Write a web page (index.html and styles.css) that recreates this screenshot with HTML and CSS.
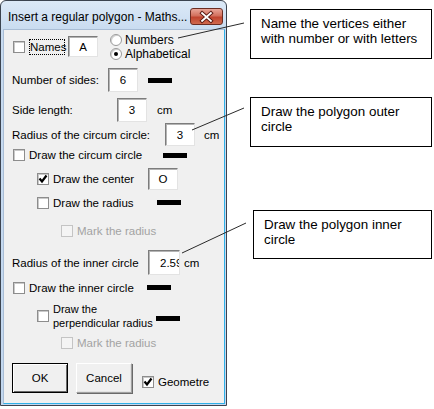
FILE: index.html
```html
<!DOCTYPE html>
<html lang="en">
<head>
  <meta charset="UTF-8">
  <title>Insert a regular polygon</title>
  <link rel="stylesheet" href="styles.css">
</head>
<body>
  <div class="page">
    <div class="dialog">
      <div class="titlebar">
        <span class="title">Insert a regular polygon - Maths...</span>
        <span class="close">
          <svg width="32" height="16" viewBox="0 0 32 16">
            <path d="M11.5 4 L20.5 12 M20.5 4 L11.5 12" stroke="#5a1a12" stroke-width="4" stroke-linecap="square"/>
            <path d="M11.5 4 L20.5 12 M20.5 4 L11.5 12" stroke="#fff" stroke-width="2" stroke-linecap="square"/>
          </svg>
        </span>
      </div>

      <div class="client">
        <div class="row row-names">
          <span class="check ml9"></span>
          <span class="focus">Names</span>
          <span class="input in-names">A</span>
          <div class="radios">
            <div class="radio-row"><span class="radio"></span><span class="rlabel">Numbers</span></div>
            <div class="radio-row"><span class="radio on"></span><span class="rlabel">Alphabetical</span></div>
          </div>
        </div>

        <div class="row row-sides">
          <span class="label w96">Number of sides:</span>
          <span class="input in-24">6</span>
          <span class="bar ml10"></span>
        </div>

        <div class="row row-side">
          <span class="label w105">Side length:</span>
          <span class="input in-24">3</span>
          <span class="unit ml10">cm</span>
        </div>

        <div class="row row-circum">
          <span class="label w153">Radius of the circum circle:</span>
          <span class="input in-23">3</span>
          <span class="unit ml9">cm</span>
        </div>

        <div class="row row-e">
          <span class="check ml9"></span>
          <span class="clabel w134">Draw the circum circle</span>
          <span class="bar"></span>
        </div>

        <div class="row row-f">
          <span class="check ml33 checked"><svg width="10" height="10" viewBox="0 0 10 10"><path d="M1.5 4.5 L4 7.5 L8.5 1.5" fill="none" stroke="#000" stroke-width="2.2"/></svg></span>
          <span class="clabel w95">Draw the center</span>
          <span class="input in-22">O</span>
        </div>

        <div class="row row-g">
          <span class="check ml33"></span>
          <span class="clabel w104">Draw the radius</span>
          <span class="bar"></span>
        </div>

        <div class="row row-h">
          <span class="check ml57 off"></span>
          <span class="clabel muted">Mark the radius</span>
        </div>

        <div class="row row-i">
          <span class="label w136">Radius of the inner circle</span>
          <span class="input in-inner">2.59</span>
          <span class="unit ml4">cm</span>
        </div>

        <div class="row row-j">
          <span class="check ml9"></span>
          <span class="clabel w118">Draw the inner circle</span>
          <span class="bar"></span>
        </div>

        <div class="row row-k">
          <span class="check ml33"></span>
          <span class="clabel two w103">Draw the<br>perpendicular radius</span>
          <span class="bar low"></span>
        </div>

        <div class="row row-l">
          <span class="check ml57 off"></span>
          <span class="clabel muted">Mark the radius</span>
        </div>

        <div class="row row-m">
          <span class="btn default">OK</span>
          <span class="btn">Cancel</span>
          <span class="check ml10 geo checked"><svg width="10" height="10" viewBox="0 0 10 10"><path d="M1.5 4.5 L4 7.5 L8.5 1.5" fill="none" stroke="#000" stroke-width="2.2"/></svg></span>
          <span class="clabel geo-label">Geometre</span>
        </div>
      </div>
    </div>

    <div class="notes">
      <div class="note note-names">Name the vertices either<br>with number or with letters</div>
      <div class="note note-outer">Draw the polygon outer<br>circle</div>
      <div class="note note-inner">Draw the polygon inner<br>circle</div>
    </div>

    <svg class="leaders" width="434" height="409" viewBox="0 0 434 409">
      <line x1="178" y1="38" x2="244" y2="23"/>
      <line x1="192" y1="130" x2="244" y2="108"/>
      <line x1="182" y1="253" x2="246" y2="223"/>
    </svg>
  </div>
</body>
</html>
```

FILE: styles.css
```css
body {
  margin: 0;
  background: #fff;
  font-family: "Liberation Sans", Arial, sans-serif;
  color: #000;
}

.page {
  position: relative;
  display: flex;
  align-items: flex-start;
  width: 434px;
  height: 409px;
}

/* window frame */
.dialog {
  width: 222px;
  height: 403px;
  border: 1px solid #3c4450;
  border-radius: 6px 6px 0 0;
  background: linear-gradient(#dce9f7, #c8dbf0 30px, #c2d7ef);
  padding: 0 1px 1px 2px;
  display: flex;
  flex-direction: column;
}

.titlebar {
  height: 28px;
  display: flex;
  align-items: center;
  justify-content: space-between;
}

.title {
  font-family: "Liberation Sans", Arial, sans-serif;
  font-size: 12px;
  margin-left: 5px;
  margin-top: 4px;
  color: #000;
}

.close {
  width: 31px;
  height: 15px;
  margin-top: 3px;
  margin-right: 2px;
  border: 1px solid #6b2c22;
  border-radius: 3px;
  background: linear-gradient(#e9a598, #d2705d 45%, #c0442f 55%, #d06a4e);
  display: flex;
}

.client {
  flex: 1;
  background: #f0f0f0;
  border-top: 1px solid #a9bdd5;
  border-left: 1px solid #a9bdd5;
  border-right: 1px solid #2fb0e8;
  border-bottom: 1px solid #2fb0e8;
  padding-top: 3px;
  font-size: 11.5px;
}

.row {
  display: flex;
  align-items: center;
}

.row-names { height: 27px; }
.row-sides { height: 24px; margin-top: 8px; }
.row-side { height: 24px; margin-top: 6px; }
.row-circum { height: 23px; margin-top: 1px; }
.row-e { height: 14px; margin-top: 2px; }
.row-f { height: 22px; margin-top: 6px; }
.row-g { height: 13px; margin-top: 6px; }
.row-h { height: 13px; margin-top: 15px; }
.row-i { height: 25px; margin-top: 13px; }
.row-j { height: 13px; margin-top: 6px; }
.row-k { height: 28px; margin-top: 8px; }
.row-l { height: 14px; margin-top: 6px; }
.row-m { height: 30px; margin-top: 13px; }

.ml4 { margin-left: 4px; }
.ml9 { margin-left: 9px; }
.ml10 { margin-left: 10px; }
.ml33 { margin-left: 33px; }
.ml57 { margin-left: 57px; }

.label {
  margin-left: 8px;
  flex: none;
}

.w96 { width: 96px; }
.w105 { width: 105px; }
.w153 { width: 153px; }
.w136 { width: 136px; }
.w134 { width: 134px; }
.w95 { width: 95px; }
.w104 { width: 104px; }
.w118 { width: 118px; }
.w103 { width: 103px; }

/* checkboxes */
.check {
  width: 10px;
  height: 10px;
  flex: none;
  background: #fff;
  border: 1px solid #8d8d8d;
  box-shadow: inset 1px 1px 0 #c9c9c9;
  display: flex;
  align-items: center;
  justify-content: center;
}

.check.off {
  border-color: #c4c4c4;
  background: #f4f4f4;
  box-shadow: none;
}

.clabel {
  margin-left: 4px;
  flex: none;
}

.clabel.two {
  font-size: 11px;
  line-height: 14px;
  white-space: nowrap;
}

.muted {
  color: #a3a3a3;
}

.focus {
  margin-left: 4px;
  width: 34px;
  height: 14px;
  line-height: 14px;
  border: 1px dotted #000;
  text-align: center;
}

/* text boxes */
.input {
  flex: none;
  box-sizing: border-box;
  width: 30px;
  background: #fff;
  border-top: 1px solid #7c7c7c;
  border-left: 1px solid #7c7c7c;
  border-right: 1px solid #e3e3e3;
  border-bottom: 1px solid #e3e3e3;
  box-shadow: inset 1px 1px 0 #b4b4b4;
  display: flex;
  align-items: center;
  justify-content: center;
}

.in-names { height: 21px; margin-left: 3px; }
.in-24 { height: 24px; }
.in-23 { height: 23px; }
.in-22 { height: 22px; }

.in-inner {
  width: 32px;
  height: 25px;
  justify-content: flex-start;
  padding-left: 11px;
  overflow: hidden;
  white-space: nowrap;
}

.unit {
  flex: none;
}

.bar {
  flex: none;
  width: 24px;
  height: 5px;
  background: #000;
}

.bar.low {
  margin-top: 5px;
}

/* option buttons */
.radios {
  align-self: flex-start;
  margin-left: 12px;
  display: flex;
  flex-direction: column;
}

.radio-row {
  height: 14px;
  display: flex;
  align-items: center;
}

.radio {
  width: 10px;
  height: 10px;
  border: 1px solid #9a9a9a;
  border-radius: 50%;
  background: #fff;
  box-shadow: inset 1px 1px 0 #d0d0d0;
  position: relative;
}

.radio.on::after {
  content: "";
  position: absolute;
  left: 3px;
  top: 3px;
  width: 4px;
  height: 4px;
  border-radius: 50%;
  background: #000;
}

.rlabel {
  margin-left: 3px;
  font-size: 12px;
}

/* command buttons */
.btn {
  box-sizing: border-box;
  width: 56px;
  height: 30px;
  margin-left: 8px;
  background: #f0f0f0;
  border-top: 1px solid #fff;
  border-left: 1px solid #fff;
  border-right: 1px solid #a0a0a0;
  border-bottom: 1px solid #a0a0a0;
  box-shadow: 1px 1px 0 #696969, inset -1px -1px 0 #e3e3e3;
  display: flex;
  align-items: center;
  justify-content: center;
}

.btn.default {
  border: 1px solid #000;
  box-shadow: inset 1px 1px 0 #fff, inset -1px -1px 0 #696969;
}

.geo {
  margin-top: 8px;
}

.geo-label {
  margin-top: 8px;
}

/* callouts */
.notes {
  display: flex;
  flex-direction: column;
  margin-left: 23px;
}

.note {
  box-sizing: border-box;
  width: 182px;
  height: 50px;
  border: 1px solid #000;
  background: #fff;
  padding: 6px 0 0 10px;
  font-size: 13.4px;
  line-height: 15px;
}

.note-names { margin-top: 9px; }
.note-outer { margin-top: 38px; }
.note-inner { margin-top: 63px; margin-left: 3px; width: 179px; height: 49px; }

.leaders {
  position: absolute;
  left: 0;
  top: 0;
  pointer-events: none;
}

.leaders line {
  stroke: #2a2a2a;
  stroke-width: 1;
}
```
